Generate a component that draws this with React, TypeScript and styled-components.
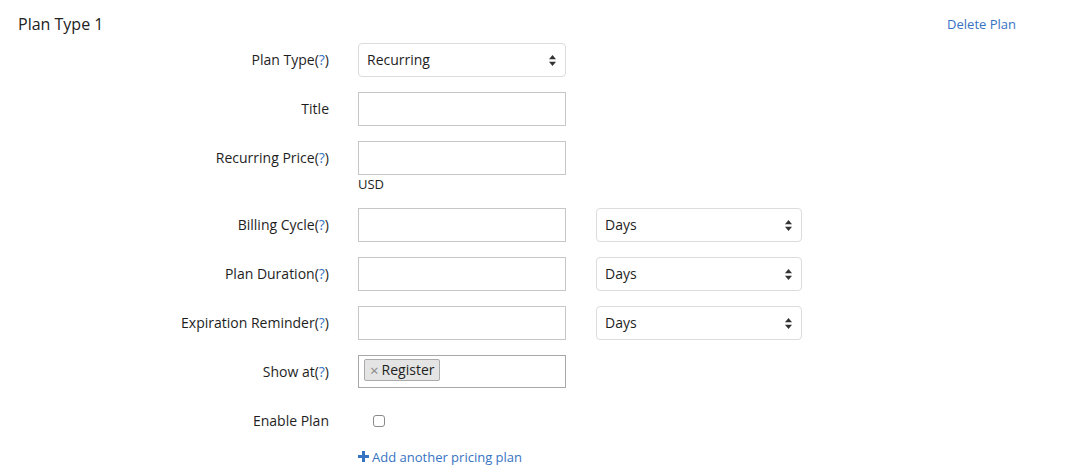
import React from 'react';
import styled, { createGlobalStyle } from 'styled-components';

const GlobalStyle = createGlobalStyle`
  body {
    margin: 0;
    background: #fff;
    font-family: "Open Sans", "Liberation Sans", sans-serif;
    color: #222;
  }
  * { box-sizing: border-box; }
`;

const linkColor = '#3673c2';

const Page = styled.div`
  width: 1075px;
  height: 475px;
  overflow: hidden;
`;

const Header = styled.div`
  display: flex;
  justify-content: space-between;
  align-items: center;
  padding: 12px 59px 7px 18px;
  line-height: 24px;
`;

const Title = styled.h2`
  margin: 0;
  font-size: 16px;
  font-weight: 400;
  color: #222;
`;

const Link = styled.a`
  color: ${linkColor};
  font-size: 13px;
  text-decoration: none;
  cursor: pointer;
`;

const Form = styled.div`
  display: flex;
  flex-direction: column;
`;

const Row = styled.div<{ gapAfter?: number }>`
  display: grid;
  grid-template-columns: 329px 208px 207px;
  column-gap: 29px;
  margin-bottom: ${({ gapAfter }) => (gapAfter ?? 15)}px;
`;

const Label = styled.label`
  height: 34px;
  display: flex;
  align-items: center;
  justify-content: flex-end;
  padding-bottom: 2px;
  font-size: 14px;
  color: #1e1e1e;
`;

const Help = styled.span`
  color: ${linkColor};
`;

const Field = styled.div`
  display: flex;
  flex-direction: column;
`;

const TextInput = styled.input`
  height: 34px;
  width: 208px;
  border: 1px solid #c6c6c6;
  border-radius: 0;
  padding: 0 8px;
  font: inherit;
  font-size: 13px;
  outline: none;
`;

const Note = styled.div`
  font-size: 13px;
  line-height: 18px;
  color: #1e1e1e;
`;

const SelectBox = styled.div<{ offset?: number }>`
  position: relative;
  height: 34px;
  margin-left: ${({ offset }) => offset ?? 0}px;
  border: 1px solid #dcdcdc;
  border-radius: 4px;
  background: #fff;
  display: flex;
  align-items: center;
  padding: 0 9px 2px 8px;
  font-size: 14px;
  color: #1e1e1e;
`;

const SelectText = styled.span`
  flex: 1;
`;

const Arrows = styled.svg`
  width: 7px;
  height: 11px;
  margin-top: 2px;
`;

const TagInput = styled.div`
  height: 33px;
  width: 208px;
  border: 1px solid #a8a8a8;
  padding: 3px 5px;
  display: flex;
  align-items: flex-start;
`;

const Tag = styled.span`
  display: inline-flex;
  align-items: center;
  height: 22px;
  padding: 0 5px 1px 5px;
  background: #e4e4e4;
  border: 1px solid #aaa;
  border-radius: 2px;
  font-size: 14px;
  color: #1e1e1e;
`;

const TagRemove = styled.span`
  color: #888;
  font-size: 15px;
  margin-right: 3px;
`;

const CheckCell = styled.div`
  height: 34px;
  display: flex;
  align-items: center;
  padding-left: 15px;
`;

const Checkbox = styled.span`
  width: 12px;
  height: 12px;
  border: 1px solid #8a8a8a;
  border-radius: 3px;
  background: #fff;
`;

const AddRow = styled.div`
  padding-left: 358px;
  line-height: 18px;
`;

const AddLink = styled(Link)`
  display: inline-flex;
  align-items: center;
  gap: 3px;
`;

const Select = ({ value, offset }: { value: string; offset?: number }) => (
  <SelectBox offset={offset}>
    <SelectText>{value}</SelectText>
    <Arrows viewBox="0 0 7 11">
      <path d="M3.5 0 L7 4.3 H0 Z" fill="#333" />
      <path d="M3.5 11 L7 6.7 H0 Z" fill="#333" />
    </Arrows>
  </SelectBox>
);

const LabelText = ({ text, help }: { text: string; help?: boolean }) => (
  <Label>
    {text}
    {help && (
      <>
        (<Help>?</Help>)
      </>
    )}
  </Label>
);

export default function App() {
  return (
    <Page>
      <GlobalStyle />
      <Header>
        <Title>Plan Type 1</Title>
        <Link>Delete Plan</Link>
      </Header>
      <Form>
        <Row>
          <LabelText text="Plan Type" help />
          <Select value="Recurring" />
        </Row>
        <Row>
          <LabelText text="Title" />
          <TextInput />
        </Row>
        <Row>
          <LabelText text="Recurring Price" help />
          <Field>
            <TextInput />
            <Note>USD</Note>
          </Field>
        </Row>
        <Row>
          <LabelText text="Billing Cycle" help />
          <TextInput />
          <Select value="Days" offset={1} />
        </Row>
        <Row>
          <LabelText text="Plan Duration" help />
          <TextInput />
          <Select value="Days" offset={1} />
        </Row>
        <Row>
          <LabelText text="Expiration Reminder" help />
          <TextInput />
          <Select value="Days" offset={1} />
        </Row>
        <Row>
          <LabelText text="Show at" help />
          <TagInput>
            <Tag>
              <TagRemove>×</TagRemove>Register
            </Tag>
          </TagInput>
        </Row>
        <Row gapAfter={9}>
          <LabelText text="Enable Plan" />
          <CheckCell>
            <Checkbox />
          </CheckCell>
        </Row>
        <AddRow>
          <AddLink>
            <svg width="11" height="11" viewBox="0 0 11 11">
              <path d="M4 0 H7 V4 H11 V7 H7 V11 H4 V7 H0 V4 H4 Z" fill={linkColor} />
            </svg>
            Add another pricing plan
          </AddLink>
        </AddRow>
      </Form>
    </Page>
  );
}
